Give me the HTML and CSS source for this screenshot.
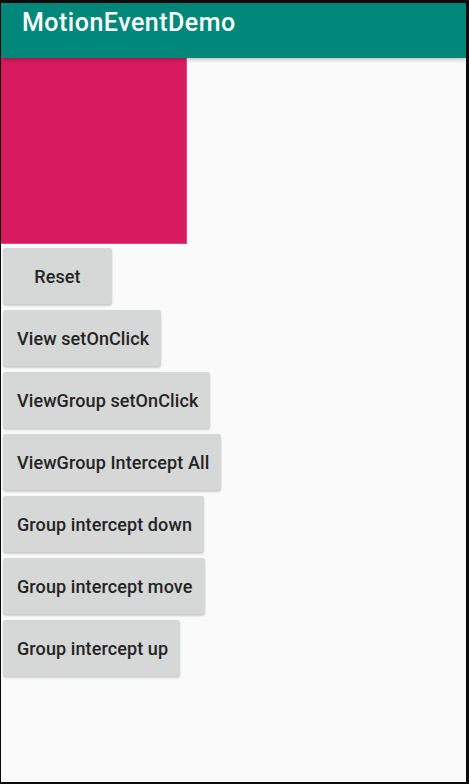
FILE: index.html
```html
<!DOCTYPE html>
<html>
<head>
<meta charset="utf-8">
<link rel="stylesheet" href="styles.css">
</head>
<body>
<div class="frame">
  <div class="screen">
    <header class="toolbar"><span class="title">MotionEventDemo</span></header>
    <main class="content">
      <div class="box"></div>
      <div class="buttons">
        <button class="btn btn-min">Reset</button>
        <button class="btn">View setOnClick</button>
        <button class="btn">ViewGroup setOnClick</button>
        <button class="btn">ViewGroup Intercept All</button>
        <button class="btn">Group intercept down</button>
        <button class="btn">Group intercept move</button>
        <button class="btn">Group intercept up</button>
      </div>
    </main>
  </div>
</div>
</body>
</html>
```

FILE: styles.css
```css
html, body {
  margin: 0;
  padding: 0;
  background: #0b0b0b;
}
.frame {
  width: 469px;
  height: 784px;
  box-sizing: border-box;
  padding: 3px 3px 2px 1px;
  background: #0b0b0b;
}
.screen {
  width: 100%;
  height: 100%;
  background: #fafafa;
  display: flex;
  flex-direction: column;
  overflow: hidden;
}
.toolbar {
  height: 55px;
  flex: none;
  box-sizing: border-box;
  background: #00877a;
  padding: 5px 0 0 21px;
  box-shadow: 0 2px 4px rgba(0,0,0,0.22);
  position: relative;
  z-index: 1;
}
.title {
  font-family: Roboto, "Noto Sans", sans-serif;
  font-weight: 500;
  font-size: 25px;
  letter-spacing: 0.5px;
  color: #ffffff;
  line-height: normal;
}
.content {
  display: flex;
  flex-direction: column;
  align-items: flex-start;
}
.box {
  width: 186px;
  height: 186px;
  background: #d81b60;
  box-shadow: inset -1px 0 0 #e6457f, inset 0 -1px 0 #e6457f;
}
.buttons {
  display: flex;
  flex-direction: column;
  align-items: flex-start;
  gap: 6px;
  padding: 4px 0 0 2px;
}
.btn {
  height: 56px;
  border: none;
  border-radius: 3px;
  background: #d6d7d7;
  box-shadow: 0 2px 2px rgba(0,0,0,0.18), 0 0 1px rgba(0,0,0,0.12);
  font-family: Roboto, "Noto Sans", sans-serif;
  font-weight: 500;
  font-size: 18px;
  letter-spacing: 0.1px;
  color: #242424;
  padding: 0 12px 0 14px;
  margin: 0;
  text-align: center;
}
.btn-min {
  min-width: 109px;
  padding: 0;
}
```
